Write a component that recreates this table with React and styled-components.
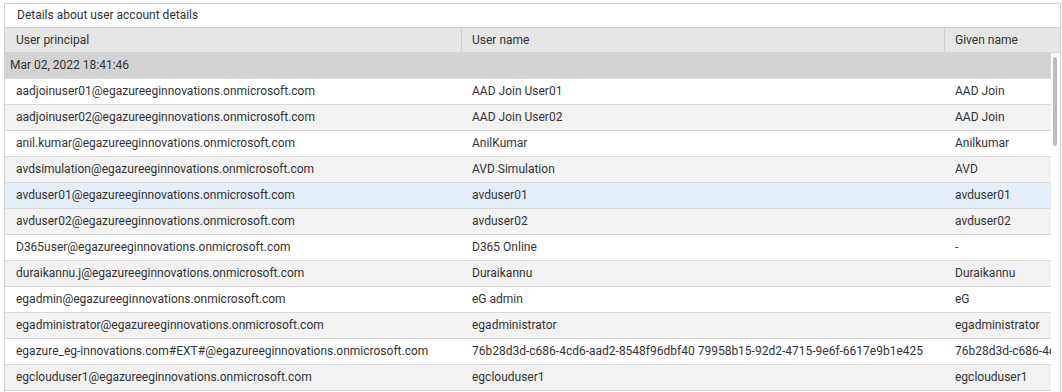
import styled, { createGlobalStyle } from 'styled-components';

const GlobalStyle = createGlobalStyle`
  body {
    margin: 0;
    background: #ffffff;
    font-family: Roboto, "Liberation Sans", sans-serif;
  }
`;

const USERS = [
  ['aadjoinuser01@egazureeginnovations.onmicrosoft.com', 'AAD Join User01', 'AAD Join'],
  ['aadjoinuser02@egazureeginnovations.onmicrosoft.com', 'AAD Join User02', 'AAD Join'],
  ['anil.kumar@egazureeginnovations.onmicrosoft.com', 'AnilKumar', 'Anilkumar'],
  ['avdsimulation@egazureeginnovations.onmicrosoft.com', 'AVD Simulation', 'AVD'],
  ['avduser01@egazureeginnovations.onmicrosoft.com', 'avduser01', 'avduser01'],
  ['avduser02@egazureeginnovations.onmicrosoft.com', 'avduser02', 'avduser02'],
  ['D365user@egazureeginnovations.onmicrosoft.com', 'D365 Online', '-'],
  ['duraikannu.j@egazureeginnovations.onmicrosoft.com', 'Duraikannu', 'Duraikannu'],
  ['egadmin@egazureeginnovations.onmicrosoft.com', 'eG admin', 'eG'],
  ['egadministrator@egazureeginnovations.onmicrosoft.com', 'egadministrator', 'egadministrator'],
  [
    'egazure_eg-innovations.com#EXT#@egazureeginnovations.onmicrosoft.com',
    '76b28d3d-c686-4cd6-aad2-8548f96dbf40 79958b15-92d2-4715-9e6f-6617e9b1e425',
    '76b28d3d-c686-4cd6-aad2-8548f96dbf40',
  ],
  ['egclouduser1@egazureeginnovations.onmicrosoft.com', 'egclouduser1', 'egclouduser1'],
];

const SELECTED = 4;

const App = () => {
  return (
    <>
      <GlobalStyle />
      <Page>
        <Panel>
          <Title>Details about user account details</Title>
          <HeaderRow>
            <HeaderCell>User principal</HeaderCell>
            <HeaderCell>User name</HeaderCell>
            <HeaderCell>Given name</HeaderCell>
          </HeaderRow>
          <Body>
            <Rows>
              <DateRow>Mar 02, 2022 18:41:46</DateRow>
              {USERS.map((u, i) => (
                <Row key={u[0]} $odd={i % 2 === 1} $selected={i === SELECTED}>
                  <Cell>{u[0]}</Cell>
                  <Cell>{u[1]}</Cell>
                  <Cell>{u[2]}</Cell>
                </Row>
              ))}
            </Rows>
            <ScrollTrack>
              <ScrollThumb />
            </ScrollTrack>
          </Body>
        </Panel>
      </Page>
    </>
  );
};

const Page = styled.div`
  padding: 3px 1px 0 4px;
  height: 392px;
  box-sizing: border-box;
  overflow: hidden;
`;

const Panel = styled.div`
  border: 1px solid #cfcfcf;
  border-bottom: none;
  height: 389px;
  box-sizing: border-box;
  display: flex;
  flex-direction: column;
  font-size: 12px;
  color: #333333;
`;

const Title = styled.div`
  height: 23px;
  line-height: 23px;
  padding-left: 12px;
  border-bottom: 1px solid #cfcfcf;
  flex-shrink: 0;
`;

const HeaderRow = styled.div`
  display: grid;
  grid-template-columns: 456px 483px 1fr;
  height: 24px;
  background: #e6e6e6;
  border-bottom: 1px solid #d6d6d6;
  flex-shrink: 0;
`;

const HeaderCell = styled.div`
  line-height: 24px;
  padding-left: 10px;
  border-left: 1px solid #d0d0d0;
  white-space: nowrap;
  overflow: hidden;

  &:first-child {
    border-left: none;
    padding-left: 11px;
  }
`;

const Body = styled.div`
  flex: 1;
  display: flex;
  min-height: 0;
`;

const Rows = styled.div`
  flex: 1;
  min-width: 0;
  overflow: hidden;
`;

const DateRow = styled.div`
  height: 25px;
  line-height: 25px;
  padding-left: 5px;
  background: #d3d3d3;
  border-bottom: 1px solid #e0e0e0;
`;

const Row = styled.div`
  display: grid;
  grid-template-columns: 456px 483px 1fr;
  height: 25px;
  border-bottom: 1px solid #d9d9d9;
  background: ${(p) => (p.$selected ? '#e3eef8' : p.$odd ? '#f2f2f2' : '#ffffff')};
`;

const Cell = styled.div`
  line-height: 25px;
  padding-left: 11px;
  white-space: nowrap;
  overflow: hidden;
`;

const ScrollTrack = styled.div`
  width: 9px;
  flex-shrink: 0;
  padding: 4px 2px 0 2px;
  box-sizing: border-box;
`;

const ScrollThumb = styled.div`
  width: 4px;
  height: 89px;
  border-radius: 2px;
  background: #bdbdbd;
`;

export default App;
